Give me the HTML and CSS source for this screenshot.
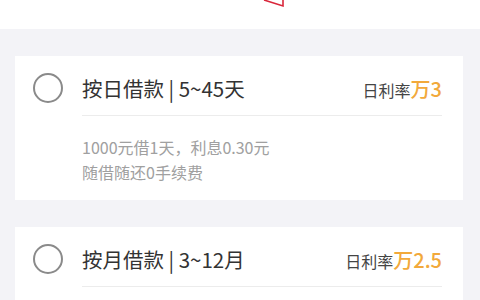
FILE: index.html
```html
<!DOCTYPE html>
<html lang="zh-CN">
<head>
    <meta charset="UTF-8">
    <meta name="viewport" content="width=device-width, initial-scale=1.0">
    <title>借款方式</title>
    <link rel="stylesheet" href="styles.css">
</head>
<body>
    <div class="topbar">
        <svg class="marker" width="24" height="8" viewBox="0 0 24 8">
            <polyline points="2,0 21,6 21,0" fill="none" stroke="#d9263a" stroke-width="1.6"/>
        </svg>
    </div>
    <div class="list">
        <div class="card">
            <div class="card-head">
                <span class="radio"></span>
                <span class="title">按日借款 | 5~45天</span>
                <span class="rate">日利率<em>万3</em></span>
            </div>
            <div class="divider"></div>
            <div class="card-body">
                <p>1000元借1天，利息0.30元</p>
                <p>随借随还0手续费</p>
            </div>
        </div>
        <div class="card">
            <div class="card-head">
                <span class="radio"></span>
                <span class="title">按月借款 | 3~12月</span>
                <span class="rate">日利率<em>万2.5</em></span>
            </div>
            <div class="divider"></div>
        </div>
    </div>
</body>
</html>
```

FILE: styles.css
```css
body {
    margin: 0;
    background-color: #f3f3f7;
    font-family: "Noto Sans CJK SC", "Noto Sans", sans-serif;
    overflow: hidden;
}

.topbar {
    height: 29px;
    background-color: #fff;
    position: relative;
}

.marker {
    position: absolute;
    left: 262px;
    top: 0;
}

.list {
    padding: 27px 17px 0 15px;
    display: flex;
    flex-direction: column;
    gap: 27px;
}

.card {
    background-color: #fff;
    padding: 12px 21px 15px 18px;
    height: 117px;
}

.card-head {
    display: flex;
    align-items: center;
    height: 40px;
}

.radio {
    width: 26px;
    height: 26px;
    border: 2px solid #8a8a8a;
    border-radius: 50%;
    margin-right: 19px;
    flex-shrink: 0;
}

.title {
    font-size: 20.5px;
    color: #333;
    flex: 1;
}

.rate {
    font-size: 16px;
    color: #444;
    display: flex;
    align-items: baseline;
}

.rate em {
    font-style: normal;
    font-size: 20px;
    font-weight: 500;
    color: #f2a93b;
}

.divider {
    margin: 7px 0 0 49px;
    border-top: 1px solid #ececec;
}

.card-body {
    margin-left: 49px;
    padding-top: 19px;
}

.card-body p {
    margin: 0;
    font-size: 16px;
    line-height: 25px;
    color: #a0a0a0;
}
```
